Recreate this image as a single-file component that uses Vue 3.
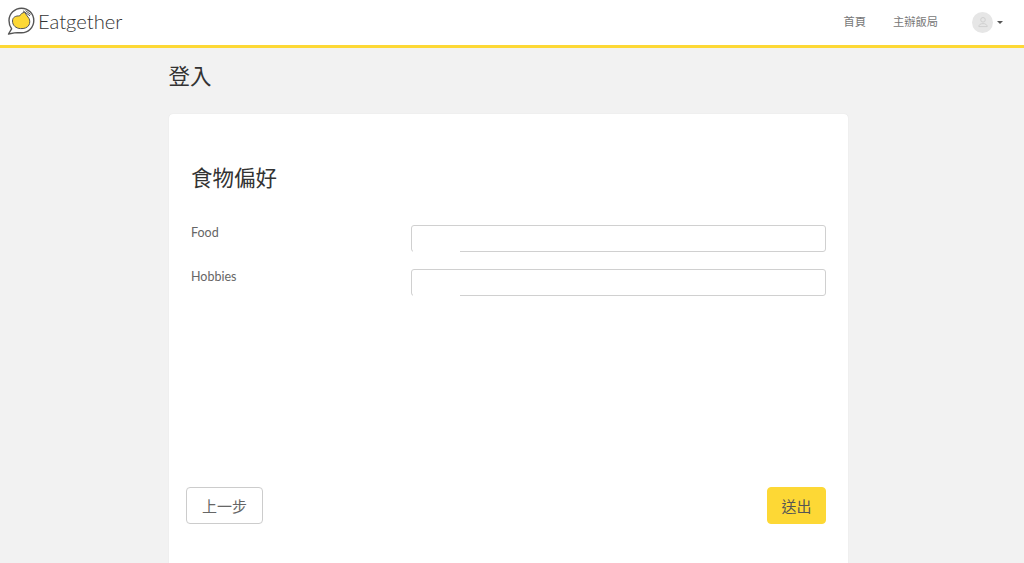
<script setup>
const navLinks = ['首頁', '主辦飯局']
const fields = ['Food', 'Hobbies']
</script>

<template>
  <div class="page">
    <header class="topbar">
      <a class="brand">
        <svg class="logo" width="28" height="28" viewBox="0 0 28 28">
          <path d="M14.5 1.2C21.3 1.2 26.8 6.7 26.8 13.5S21.3 25.8 14.5 25.8C12 25.8 9.5 25.5 7.5 25.9L1.5 27 4.6 21.8C2.9 19.6 2 16.7 2 13.5 2 6.7 7.7 1.2 14.5 1.2Z" fill="#fff" stroke="#555" stroke-width="1.4" stroke-linejoin="round"/>
          <path d="M5.5 14C5.5 10 9 8.6 12.5 9C13.6 7 15.5 5.8 17.5 5.2L22 11.5C23 13.5 23 16 22 18C20.5 20.8 17 21.8 13.5 21.6C9 21.4 5.5 18.5 5.5 14Z" fill="#fdd835" stroke="#555" stroke-width="1"/>
          <path d="M16 3.8L23 8.8M18.5 3.6L23.6 7.4" fill="none" stroke="#555" stroke-width="1"/>
        </svg>
        <span class="wordmark">Eatgether</span>
      </a>
      <nav class="nav">
        <a v-for="link in navLinks" :key="link" class="nav-link">{{ link }}</a>
        <div class="user">
          <span class="avatar">
            <svg width="12" height="12" viewBox="0 0 12 12" fill="none" stroke="#d0d0d0" stroke-width="1">
              <circle cx="6" cy="3.8" r="2.3"/>
              <path d="M1.8 10.6C2 8.4 3.8 7.6 6 7.6S10 8.4 10.2 10.6Z"/>
            </svg>
          </span>
          <span class="caret"></span>
        </div>
      </nav>
    </header>

    <main class="content">
      <h1 class="page-title">登入</h1>
      <section class="card">
        <h2 class="card-title">食物偏好</h2>
        <div class="fields">
          <div v-for="field in fields" :key="field" class="field">
            <label class="field-label">{{ field }}</label>
            <div class="input-wrap">
              <input class="input" type="text" />
            </div>
          </div>
        </div>
        <div class="actions">
          <button class="btn btn-back" type="button">上一步</button>
          <button class="btn btn-submit" type="button">送出</button>
        </div>
      </section>
    </main>
  </div>
</template>

<style>
html, body { margin: 0; overflow: hidden; }
</style>

<style scoped>
.page {
  height: 563px;
  overflow: hidden;
  background: #f2f2f2;
  font-family: Lato, "Noto Sans CJK TC", sans-serif;
  color: #333;
}
.topbar {
  height: 45px;
  box-sizing: content-box;
  display: flex;
  align-items: center;
  justify-content: space-between;
  background: #fff;
  border-bottom: 3px solid #fdd835;
}
.brand {
  display: flex;
  align-items: center;
  gap: 3px;
  padding-left: 7px;
}
.logo { display: block; margin-top: -3px; }
.wordmark {
  font-family: Lato, sans-serif;
  font-weight: 300;
  font-size: 20.2px;
  color: #333;
  line-height: 28px;
  margin-top: -3px;
}
.nav {
  display: flex;
  align-items: center;
  padding-right: 21px;
  margin-top: -4px;
}
.nav-link {
  font-family: "Noto Sans CJK TC", sans-serif;
  font-size: 11.25px;
  color: #777;
  margin-right: 27px;
}
.user {
  display: flex;
  align-items: center;
  gap: 4px;
  margin-left: 7px;
  margin-top: 3px;
}
.avatar {
  width: 21px;
  height: 21px;
  border-radius: 50%;
  background: #e6e6e6;
  display: flex;
  align-items: center;
  justify-content: center;
}
.caret {
  width: 0;
  height: 0;
  border-left: 3.5px solid transparent;
  border-right: 3.5px solid transparent;
  border-top: 3.5px solid #555;
}
.content {
  width: 679.5px;
  margin-left: 168.5px;
}
.page-title {
  margin: 0;
  padding-top: 12px;
  height: 54px;
  font-family: "Noto Sans CJK TC", sans-serif;
  font-size: 21.5px;
  font-weight: 400;
  line-height: 30px;
  color: #333;
}
.card {
  box-sizing: border-box;
  height: 460px;
  padding: 49px 22px 0 22.5px;
  background: #fff;
  border-radius: 4px;
  box-shadow: 0 0 1px rgba(0, 0, 0, 0.12);
  display: flex;
  flex-direction: column;
}
.card-title {
  margin: 0;
  font-family: "Noto Sans CJK TC", sans-serif;
  font-size: 21.5px;
  font-weight: 400;
  line-height: 28px;
  color: #333;
}
.fields {
  margin-top: 34px;
  display: flex;
  flex-direction: column;
  gap: 17px;
}
.field {
  display: flex;
  align-items: flex-start;
}
.field-label {
  width: 219.5px;
  flex: none;
  font-size: 12.5px;
  line-height: 16px;
  color: #666;
}
.input-wrap {
  position: relative;
  flex: 1;
  height: 27px;
}
.input {
  display: block;
  box-sizing: border-box;
  width: 100%;
  height: 100%;
  padding: 0 8px;
  background: #fff;
  border: 1px solid #d0d0d0;
  border-radius: 3px;
  outline: none;
}
.input-wrap::after {
  content: "";
  position: absolute;
  left: 2px;
  bottom: 0;
  width: 47px;
  height: 2px;
  background: #fff;
}
.actions {
  margin-top: 191px;
  margin-left: -5px;
  display: flex;
  justify-content: space-between;
}
.btn {
  box-sizing: border-box;
  height: 37px;
  border-radius: 4px;
  font-family: "Noto Sans CJK TC", sans-serif;
  font-size: 15px;
  padding: 0;
  color: #666;
}
.btn-back {
  width: 77px;
  background: #fff;
  border: 1px solid #ccc;
}
.btn-submit {
  width: 59px;
  background: #fdd835;
  border: 1px solid #fdd835;
  color: #555;
}
</style>
